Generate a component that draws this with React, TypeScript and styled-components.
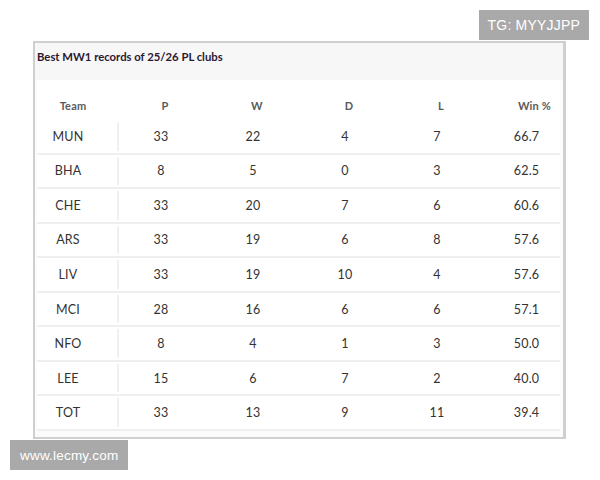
import React from 'react';
import styled, { createGlobalStyle } from 'styled-components';

const GlobalStyle = createGlobalStyle`
  html, body {
    margin: 0;
    padding: 0;
    background: #ffffff;
  }
  body {
    font-family: "Lato", "Noto Sans", sans-serif;
  }
`;

const Page = styled.div`
  width: 600px;
  height: 480px;
  display: flex;
  flex-direction: column;
  padding-top: 10px;
  box-sizing: border-box;
`;

const Stamp = styled.div<{ $right?: boolean }>`
  align-self: ${p => (p.$right ? 'flex-end' : 'flex-start')};
  margin: ${p => (p.$right ? '0 11px 1px 0' : '1px 0 0 10px')};
  height: 30px;
  padding: 0 ${p => (p.$right ? '9px' : '10px')};
  display: flex;
  align-items: center;
  background-color: #a9a9a9;
  color: #ffffff;
  font-family: "Liberation Sans", Arial, sans-serif;
  font-size: ${p => (p.$right ? '14px' : '13.5px')};
  letter-spacing: 0.2px;
`;

const Card = styled.div`
  margin-left: 33px;
  width: 533px;
  height: 398px;
  box-sizing: border-box;
  border: 2px solid #cfcfcf;
  border-right-width: 3px;
  background-color: #fbfbfb;
  display: flex;
  flex-direction: column;
`;

const TitleBar = styled.div`
  height: 37px;
  padding: 7px 0 0 2px;
  box-sizing: border-box;
  background-color: #f7f7f7;
  color: #2b1730;
  font-size: 11.3px;
  font-weight: 700;
  line-height: 14px;
`;

const Table = styled.div`
  flex: 1;
  background-color: #ffffff;
  padding: 0 3px 6px 2px;
  display: flex;
  flex-direction: column;
  background-clip: content-box;
`;

const HeadRow = styled.div`
  height: 40px;
  display: grid;
  grid-template-columns: 82px repeat(4, 92px) 1fr;
  align-items: center;
  padding-top: 10px;
  box-sizing: border-box;
`;

const HeadCell = styled.div`
  text-align: center;
  color: #5a5a5a;
  font-size: 11px;
  font-weight: 700;
  letter-spacing: 0.2px;
  &:first-child {
    padding-right: 10px;
  }
  &:last-child {
    padding-left: 22px;
  }
`;

const Row = styled.div`
  height: 34.55px;
  display: grid;
  grid-template-columns: 82px repeat(4, 92px) 1fr;
  align-items: stretch;
  border-bottom: 2px solid #efefef;
  box-sizing: border-box;
`;

const Cell = styled.div`
  display: flex;
  align-items: center;
  justify-content: center;
  padding-right: 8px;
  color: #333333;
  font-size: 12.5px;
  letter-spacing: 0.2px;
  &:first-child {
    padding-right: 18px;
    margin: 2px 0;
    border-right: 2px solid #f0f0f0;
  }
  &:last-child {
    padding-right: 0;
    padding-left: 6px;
  }
`;

const rows: [string, number, number, number, number, string][] = [
  ['MUN', 33, 22, 4, 7, '66.7'],
  ['BHA', 8, 5, 0, 3, '62.5'],
  ['CHE', 33, 20, 7, 6, '60.6'],
  ['ARS', 33, 19, 6, 8, '57.6'],
  ['LIV', 33, 19, 10, 4, '57.6'],
  ['MCI', 28, 16, 6, 6, '57.1'],
  ['NFO', 8, 4, 1, 3, '50.0'],
  ['LEE', 15, 6, 7, 2, '40.0'],
  ['TOT', 33, 13, 9, 11, '39.4'],
];

export default function App() {
  return (
    <Page>
      <GlobalStyle />
      <Stamp $right>TG: MYYJJPP</Stamp>
      <Card>
        <TitleBar>Best MW1 records of 25/26 PL clubs</TitleBar>
        <Table>
          <HeadRow>
            {['Team', 'P', 'W', 'D', 'L', 'Win %'].map(h => (
              <HeadCell key={h}>{h}</HeadCell>
            ))}
          </HeadRow>
          {rows.map(r => (
            <Row key={r[0]}>
              {r.map((v, i) => (
                <Cell key={i}>{v}</Cell>
              ))}
            </Row>
          ))}
        </Table>
      </Card>
      <Stamp>www.lecmy.com</Stamp>
    </Page>
  );
}
